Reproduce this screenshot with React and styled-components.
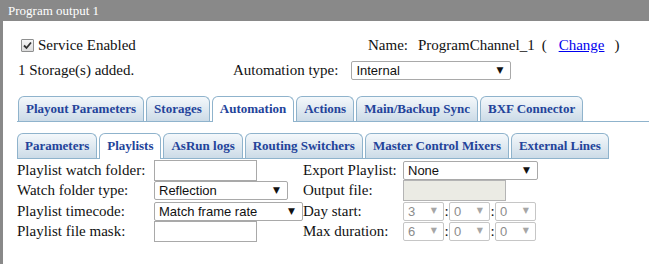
import React from "react";
import styled, { createGlobalStyle } from "styled-components";

const GlobalStyle = createGlobalStyle`
	body {
		margin: 0;
		background: #fff;
		font-family: "Liberation Serif", "Times New Roman", serif;
		color: #111;
	}
`;

const Window = styled.div`
	width: 649px;
	height: 264px;
	overflow: hidden;
	display: flex;
	flex-direction: column;
`;

const TitleBar = styled.div`
	height: 21px;
	line-height: 21px;
	padding-left: 8px;
	background: #898989;
	color: #fff;
	font-size: 13px;
`;

const Body = styled.div`
	flex: 1;
	border-left: 3px solid #898989;
	padding-left: 14px;
	font-size: 15px;
`;

const Header = styled.div`
	display: grid;
	grid-template-columns: 216px 1fr;
	grid-auto-rows: 25px;
	align-items: center;
	margin-top: 12px;
`;

const CheckLabel = styled.label`
	display: flex;
	align-items: center;
	gap: 4px;
	padding-left: 4px;
`;

const CheckBox = styled.span`
	width: 11px;
	height: 11px;
	border: 1px solid #8e8f8f;
	border-radius: 1px;
	background: linear-gradient(#f6f6f6, #dcdcdc);
	display: flex;
	align-items: center;
	justify-content: center;
`;

const NameCell = styled.div`
	padding-left: 135px;
	white-space: nowrap;
`;

const Gap = styled.span`
	margin-left: ${p => p.w}px;
`;

const Link = styled.a`
	color: #0000ee;
	text-decoration: underline;
	margin: 0 10px 0 12px;
`;

const Storage = styled.div`
	padding-left: 1px;
`;

const AutoCell = styled.div`
	display: flex;
	align-items: center;
	gap: 13px;
`;

const TabBar = styled.div`
	display: ${p => (p.fit ? "inline-flex" : "flex")};
	align-items: flex-end;
	gap: 2px;
	border-bottom: 1px solid #8fb3cc;
	margin-top: ${p => p.top}px;
	padding-left: ${p => p.indent || 0}px;
`;

const Tab = styled.div`
	height: 24px;
	line-height: 24px;
	padding: 0 7px;
	border: 1px solid #8fb3cc;
	border-bottom: none;
	border-radius: 6px 6px 0 0;
	font-size: 13px;
	font-weight: bold;
	color: #23439a;
	white-space: nowrap;
	background: ${p =>
		p.active ? "#fff" : "linear-gradient(#f4f8fb, #ccdbe7)"};
	margin-bottom: ${p => (p.active ? "-1px" : "0")};
	padding-bottom: ${p => (p.active ? "1px" : "0")};
`;

const Form = styled.div`
	display: grid;
	grid-template-columns: 137px 149px 100px auto;
	grid-auto-rows: 20.5px;
	align-items: center;
	margin-top: 1px;
	white-space: nowrap;
`;

const TextBox = styled.input`
	box-sizing: border-box;
	width: 103px;
	height: 21px;
	margin: 0;
	border: 1px solid ${p => (p.disabled ? "#b4b4b4" : "#a9a9a9")};
	background: ${p => (p.disabled ? "#ebebe4" : "#fff")};
	font: 13px "Liberation Sans", Arial, sans-serif;
`;

const SelectWrap = styled.div`
	position: relative;
	box-sizing: border-box;
	width: ${p => p.w}px;
	height: 19px;
	flex: none;

	&::after {
		content: "▼";
		position: absolute;
		right: ${p => (p.small ? 7 : 8)}px;
		top: 4px;
		font: ${p => (p.small ? 8 : 9)}px "DejaVu Sans", sans-serif;
		color: ${p => (p.disabled ? "#a6a6a6" : "#111")};
		pointer-events: none;
	}
`;

const Select = styled.select`
	appearance: none;
	box-sizing: border-box;
	width: 100%;
	height: 100%;
	margin: 0;
	padding: 0 0 0 4px;
	border: 1px solid ${p => (p.disabled ? "#c6c6c6" : "#a9a9a9")};
	border-radius: 2px;
	background: #fff;
	color: ${p => (p.disabled ? "#8c8c8c" : "#111")};
	font: 13px "Liberation Sans", Arial, sans-serif;
	opacity: 1;
`;

const TimeGroup = styled.div`
	display: flex;
	align-items: center;
`;

const Colon = styled.span`
	width: 5px;
	text-align: center;
	font-size: 15px;
`;

const Drop = ({ w, value, disabled, small }) => (
	<SelectWrap w={w} disabled={disabled} small={small}>
		<Select disabled={disabled} defaultValue={value}>
			<option>{value}</option>
		</Select>
	</SelectWrap>
);

const TimePicker = ({ values }) => (
	<TimeGroup>
		<Drop w={41} value={values[0]} disabled small />
		<Colon>:</Colon>
		<Drop w={41} value={values[1]} disabled small />
		<Colon>:</Colon>
		<Drop w={41} value={values[2]} disabled small />
	</TimeGroup>
);

const topTabs = [
	"Playout Parameters",
	"Storages",
	"Automation",
	"Actions",
	"Main/Backup Sync",
	"BXF Connector"
];

const subTabs = [
	"Parameters",
	"Playlists",
	"AsRun logs",
	"Routing Switchers",
	"Master Control Mixers",
	"External Lines"
];

const App = () => (
	<Window>
		<GlobalStyle />
		<TitleBar>Program output 1</TitleBar>
		<Body>
			<Header>
				<CheckLabel>
					<CheckBox>
						<svg width="9" height="9" viewBox="0 0 9 9">
							<path
								d="M1 4.5 L3.5 7 L8 1.5"
								fill="none"
								stroke="#333"
								strokeWidth="1.8"
							/>
						</svg>
					</CheckBox>
					Service Enabled
				</CheckLabel>
				<NameCell>
					Name:
					<Gap w={10}>ProgramChannel_1</Gap>
					<Gap w={7}>(</Gap>
					<Link href="#">Change</Link>)
				</NameCell>
				<Storage>1 Storage(s) added.</Storage>
				<AutoCell>
					Automation type:
					<Drop w={160} value="Internal" />
				</AutoCell>
			</Header>

			<TabBar top={13} indent={1}>
				{topTabs.map(t => (
					<Tab key={t} active={t === "Automation"}>
						{t}
					</Tab>
				))}
			</TabBar>

			<TabBar top={11} fit>
				{subTabs.map(t => (
					<Tab key={t} active={t === "Playlists"}>
						{t}
					</Tab>
				))}
			</TabBar>

			<Form>
				<span>Playlist watch folder:</span>
				<TextBox />
				<span>Export Playlist:</span>
				<Drop w={135} value="None" />

				<span>Watch folder type:</span>
				<Drop w={134} value="Reflection" />
				<span>Output file:</span>
				<TextBox disabled />

				<span>Playlist timecode:</span>
				<Drop w={149} value="Match frame rate" />
				<span>Day start:</span>
				<TimePicker values={["3", "0", "0"]} />

				<span>Playlist file mask:</span>
				<TextBox />
				<span>Max duration:</span>
				<TimePicker values={["6", "0", "0"]} />
			</Form>
		</Body>
	</Window>
);

export default App;
